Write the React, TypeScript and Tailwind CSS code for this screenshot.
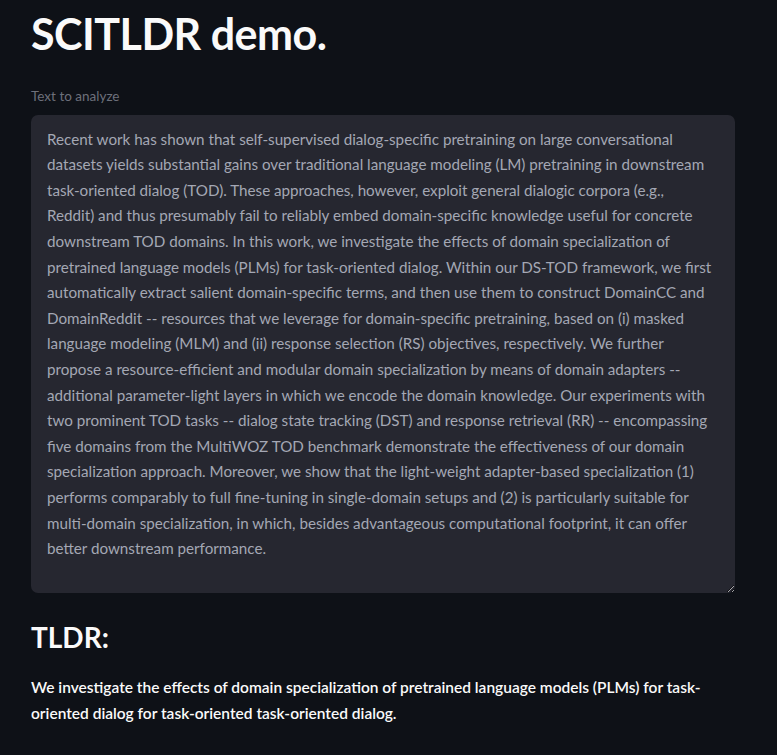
const abstractLines = [
  "Recent work has shown that self-supervised dialog-specific pretraining on large conversational",
  "datasets yields substantial gains over traditional language modeling (LM) pretraining in downstream",
  "task-oriented dialog (TOD). These approaches, however, exploit general dialogic corpora (e.g.,",
  "Reddit) and thus presumably fail to reliably embed domain-specific knowledge useful for concrete",
  "downstream TOD domains. In this work, we investigate the effects of domain specialization of",
  "pretrained language models (PLMs) for task-oriented dialog. Within our DS-TOD framework, we first",
  "automatically extract salient domain-specific terms, and then use them to construct DomainCC and",
  "DomainReddit -- resources that we leverage for domain-specific pretraining, based on (i) masked",
  "language modeling (MLM) and (ii) response selection (RS) objectives, respectively. We further",
  "propose a resource-efficient and modular domain specialization by means of domain adapters --",
  "additional parameter-light layers in which we encode the domain knowledge. Our experiments with",
  "two prominent TOD tasks -- dialog state tracking (DST) and response retrieval (RR) -- encompassing",
  "five domains from the MultiWOZ TOD benchmark demonstrate the effectiveness of our domain",
  "specialization approach. Moreover, we show that the light-weight adapter-based specialization (1)",
  "performs comparably to full fine-tuning in single-domain setups and (2) is particularly suitable for",
  "multi-domain specialization, in which, besides advantageous computational footprint, it can offer",
  "better downstream performance.",
];

export default function App() {
  return (
    <div className="min-h-[755px] bg-[#0e1117] font-['Lato',sans-serif] text-[#fafafa]">
      <div className="px-[31px] pt-[4px] pb-8">
        <h1 className="text-[43px] font-bold leading-[1.2] tracking-[-0.5px] py-1">SCITLDR demo.</h1>

        <div className="mt-[22px]">
          <label htmlFor="abstract" className="block text-[13.5px] leading-5 text-[#6d707b] mb-[9px]">
            Text to analyze
          </label>
          <textarea
            id="abstract"
            readOnly
            wrap="off"
            value={abstractLines.join("\n")}
            className="block w-[704px] h-[478px] resize-y overflow-hidden rounded-[7px] bg-[#262730] pl-4 pr-2 pt-[12px] text-[15.2px] leading-[25.6px] text-[#a4a7b4] outline-none whitespace-pre"
          />
        </div>

        <h3 className="mt-[28px] text-[28px] font-bold leading-[1.2]">TLDR:</h3>
        <p className="mt-[21px] text-[15.5px] font-semibold leading-[25.6px]">
          We investigate the effects of domain specialization of pretrained language models (PLMs) for task-
          <br />
          oriented dialog for task-oriented task-oriented dialog.
        </p>
      </div>
    </div>
  );
}
